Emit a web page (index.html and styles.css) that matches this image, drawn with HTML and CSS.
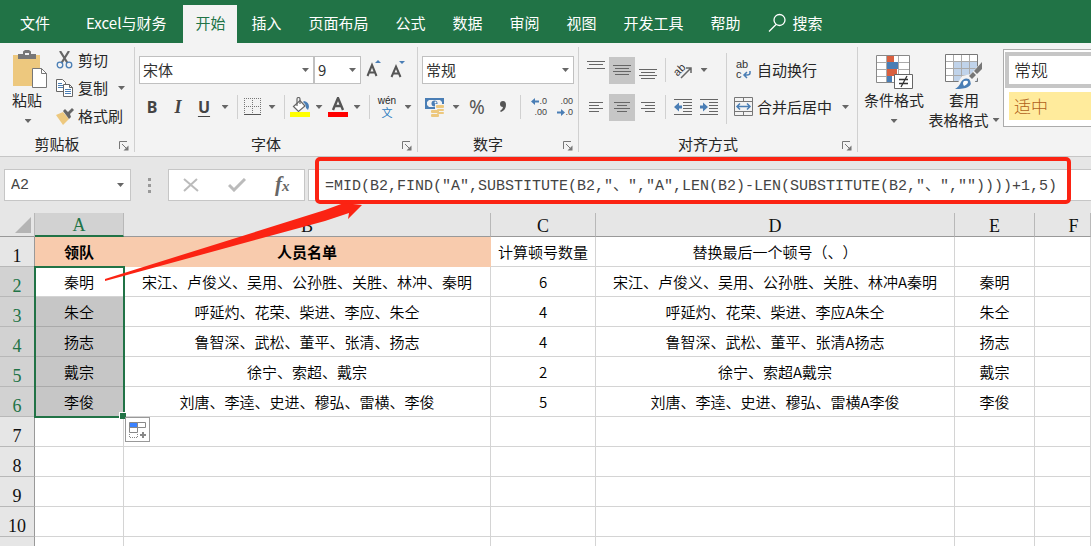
FILE: index.html
```html
<!DOCTYPE html>
<html lang="zh-CN">
<head>
<meta charset="utf-8">
<title>Excel</title>
<link rel="stylesheet" href="styles.css">
</head>
<body>
<svg class="defs" width="0" height="0"><symbol id="launch" viewBox="0 0 10 10"><path fill="none" stroke="#777" d="M.5 8V.500H8M3 3l4 4"/><path fill="#777" d="M9.500 4.500v5h-5z"/></symbol></svg>
<div class="app">
  <nav class="tabs" aria-label="功能区">
    <button class="tab tab-file">文件</button>
    <button class="tab tab-custom">Excel与财务</button>
    <button class="tab active">开始</button>
    <button class="tab">插入</button>
    <button class="tab">页面布局</button>
    <button class="tab">公式</button>
    <button class="tab">数据</button>
    <button class="tab">审阅</button>
    <button class="tab">视图</button>
    <button class="tab">开发工具</button>
    <button class="tab">帮助</button>
    <button class="tab search"><svg width="18" height="20" viewBox="0 0 18 20" fill="none" stroke="#fff" stroke-width="1.3"><circle cx="11.500" cy="7" r="5.500"/><path d="M8 11.500L1 18.500"/></svg>搜索</button>
  </nav>

  <div class="ribbon">
    <section class="group g-clip">
      <div class="group-body clip-body">
        <button class="big paste">
          <svg width="36" height="40" viewBox="0 0 36 40"><path fill="#edc87e" d="M1 5h27v31H1z"/><path fill="#777" d="M6 9V4h5V1.500L13 0h4l2 1.500V4h5v5z"/><path fill="#f3f3f3" d="M13 3h4v2h-4z"/><path fill="#fff" stroke="#777" d="M20.500 18.500h9l5 5v14h-14z"/><path fill="none" stroke="#777" d="M29.500 18.500v5h5"/></svg>
          <span>粘贴</span><i class="caret"></i>
        </button>
        <div class="clip-list">
          <button class="row-btn"><svg width="18" height="18" viewBox="0 0 18 18" fill="none"><path stroke="#666" stroke-width="2.200" d="M4 0l7.500 12M13 0L5.500 12"/><circle cx="4" cy="14" r="2.800" stroke="#4a7eb5" stroke-width="1.300"/><circle cx="13" cy="14" r="2.800" stroke="#4a7eb5" stroke-width="1.300"/></svg>剪切</button>
          <button class="row-btn"><svg width="18" height="18" viewBox="0 0 18 18" fill="#fff" stroke="#666"><path d="M.5.500h6l3 3v9h-9z"/><path stroke="#4a7eb5" d="M2 4.500h4M2 6.500h5M2 8.500h5"/><path d="M7.500 5.500h6l3 3v9h-9zM13.500 5.500v3h3"/><path stroke="#4a7eb5" d="M9 10.500h6M9 12.500h6M9 14.500h6"/></svg>复制<i class="caret push"></i></button>
          <button class="row-btn"><svg width="18" height="18" viewBox="0 0 18 18"><path fill="#edc87e" d="M0 8l7-3 6 7-6 6z"/><path fill="#666" d="M7 4l2-2 3 3 4-4 2 2-4 4 1 3-2 2z"/></svg>格式刷</button>
        </div>
      </div>
      <div class="group-foot"><span>剪贴板</span><button class="launch" aria-label="剪贴板设置"><svg width="10" height="10"><use href="#launch"/></svg></button></div>
    </section>

    <section class="group g-font">
      <div class="group-body rows">
        <div class="tool-row">
          <select class="combo font-name" aria-label="字体"><option>宋体</option></select><select class="combo font-size" aria-label="字号"><option>9</option></select>
          <button class="ic w26" aria-label="增大字号"><svg width="16" height="20" viewBox="0 0 16 20"><path fill="none" stroke="#555" stroke-width="2" d="M1.500 16L6 5l4.500 11M3 12.500h6"/><path fill="#4a7eb5" d="M9 3h6l-3-3z"/></svg></button>
          <button class="ic w22" aria-label="减小字号"><svg width="16" height="20" viewBox="0 0 16 20"><path fill="none" stroke="#555" stroke-width="2" d="M1.500 17L6 6.500 10.500 17M3 13.500h6"/><path fill="#4a7eb5" d="M9 1h6l-3 3z"/></svg></button>
        </div>
        <div class="tool-row">
          <button class="ic w26 fmt">B</button><button class="ic w26 fmt fi">I</button><button class="ic w26 fmt fu">U</button><button class="ic w16" aria-label="下划线选项"><i class="caret"></i></button>
          <i class="sep"></i>
          <button class="ic w22" aria-label="边框"><svg width="18" height="18" viewBox="0 0 18 18" stroke="#777" fill="none"><path stroke-dasharray="1 1" d="M0 .500h17M.5 0v17M16.500 0v17M8.500 0v17M0 8.500h17"/><path stroke="#555" d="M0 16.500h17"/></svg></button><button class="ic w16" aria-label="边框选项"><i class="caret"></i></button>
          <i class="sep"></i>
          <button class="ic w22" aria-label="填充颜色"><svg width="20" height="20" viewBox="0 0 20 20"><path fill="#fff" stroke="#666" stroke-width="1.200" d="M3.500 9.500L10 3.500l5 5.500-6.500 5.500z"/><path fill="none" stroke="#666" stroke-width="1.200" d="M7 9V2q0-1.500 1.500-1.500T10 2v5"/><path fill="#4a7eb5" d="M14 4q5 1 5 6l-1 3-2-2q0-4-3-6z"/><path fill="#ff0" d="M0 15h20v5H0z"/></svg></button><button class="ic w16" aria-label="填充颜色选项"><i class="caret"></i></button>
          <button class="ic w22" aria-label="字体颜色"><svg width="20" height="20" viewBox="0 0 20 20"><path fill="none" stroke="#555" stroke-width="2.400" d="M5 13L10 1l5 12M6.500 9h7"/><path fill="red" d="M0 15h20v5H0z"/></svg></button><button class="ic w16" aria-label="字体颜色选项"><i class="caret"></i></button>
          <i class="sep"></i>
          <button class="ic w26 wen"><small>wén</small><b>文</b></button><button class="ic w16" aria-label="拼音选项"><i class="caret"></i></button>
        </div>
      </div>
      <div class="group-foot"><span>字体</span><button class="launch" aria-label="字体设置"><svg width="10" height="10"><use href="#launch"/></svg></button></div>
    </section>

    <section class="group g-num">
      <div class="group-body rows">
        <div class="tool-row"><select class="combo num-format" aria-label="数字格式"><option>常规</option></select></div>
        <div class="tool-row">
          <button class="ic w26" aria-label="会计数字格式"><svg width="20" height="20" viewBox="0 0 20 20"><path fill="#4a7eb5" d="M0 1h19v11H0z"/><path fill="#f3f3f3" d="M2 5l2-2h11l2 2v3l-2 2H4L2 8z"/><circle cx="9.500" cy="6.500" r="3" fill="#4a7eb5"/><circle cx="10.500" cy="5.500" r="1" fill="#fff"/><path fill="#f3f3f3" d="M5 12h5V7h10v13H5z"/><g fill="#edc87e"><rect x="11" y="8" width="8" height="3" rx="1"/><rect x="12" y="12" width="7" height="2" rx="1"/><rect x="12" y="15" width="7" height="2" rx="1"/><rect x="6" y="13" width="8" height="3" rx="1"/><rect x="6" y="17" width="8" height="3" rx="1"/></g></svg></button><button class="ic w16" aria-label="货币选项"><i class="caret"></i></button>
          <button class="ic w26 pct">%</button><button class="ic w26" aria-label="千位分隔"><svg width="8" height="12" viewBox="0 0 8 12"><path fill="#555" d="M4 0q3 0 3 4 0 5-5 7l-1-1q3-2 3-4Q1 6 1 3q0-3 3-3z"/></svg></button>
          <i class="sep"></i>
          <button class="ic w26 dec"><span><svg width="8" height="7" viewBox="0 0 8 7"><path fill="#4a7eb5" d="M0 3.500L4 0v2.500h4v2H4V7z"/></svg>.0</span><span>.00</span></button><button class="ic w26 dec"><span>.00</span><span><svg width="8" height="7" viewBox="0 0 8 7"><path fill="#4a7eb5" d="M8 3.500L4 0v2.500H0v2h4V7z"/></svg>.0</span></button>
        </div>
      </div>
      <div class="group-foot"><span>数字</span><button class="launch" aria-label="数字设置"><svg width="10" height="10"><use href="#launch"/></svg></button></div>
    </section>

    <section class="group g-align">
      <div class="group-body align-body">
        <div class="rows">
          <div class="tool-row">
            <button class="ic w26" aria-label="顶端对齐"><svg width="18" height="28" stroke="#666"><path d="M0 5.500h18M2 8.500h14M0 12.500h18"/></svg></button><button class="ic w26 on" aria-label="垂直居中"><svg width="18" height="28" stroke="#666"><path d="M0 9.500h18M2 12.500h14M0 15.500h18M2 18.500h14"/></svg></button><button class="ic w26" aria-label="底端对齐"><svg width="18" height="28" stroke="#666"><path d="M0 13.500h18M2 16.500h14M0 19.500h18M2 22.500h14"/></svg></button>
            <i class="sep"></i>
            <button class="ic w26" aria-label="方向"><svg class="open" width="20" height="20" viewBox="0 0 20 20"><text class="ab" x="1" y="14" transform="rotate(-45 6 11)">ab</text><path fill="none" stroke="#666" stroke-width="1.500" d="M8 18L18 8M13 8h5v5"/></svg></button><button class="ic w16" aria-label="方向选项"><i class="caret"></i></button>
          </div>
          <div class="tool-row">
            <button class="ic w26" aria-label="左对齐"><svg width="14" height="28" stroke="#666"><path d="M0 9.500h14M0 12.500h10M0 15.500h14M0 18.500h10"/></svg></button><button class="ic w26 on" aria-label="居中"><svg width="18" height="28" stroke="#666"><path d="M1 9.500h16M4 12.500h10M1 15.500h16M4 18.500h10"/></svg></button><button class="ic w26" aria-label="右对齐"><svg width="14" height="28" stroke="#666"><path d="M0 9.500h14M4 12.500h10M0 15.500h14M4 18.500h10"/></svg></button>
            <i class="sep"></i>
            <button class="ic w26" aria-label="减少缩进"><svg width="18" height="18" stroke="#666"><path d="M0 1.500h18M9 4.500h9M9 7.500h9M9 10.500h9M9 13.500h9M0 16.500h18"/><path stroke="none" fill="#4a7eb5" d="M0 9l5-4.500v3h3v3H5v3z"/></svg></button><button class="ic w26" aria-label="增加缩进"><svg width="18" height="18" stroke="#666"><path d="M0 1.500h18M9 4.500h9M9 7.500h9M9 10.500h9M9 13.500h9M0 16.500h18"/><path stroke="none" fill="#4a7eb5" d="M8 9L3 4.500v3H0v3h3v3z"/></svg></button>
          </div>
        </div>
        <i class="sep tall"></i>
        <div class="rows wraps">
          <button class="row-btn"><svg class="open" width="19" height="20" viewBox="0 0 19 20"><text class="ab" x="2" y="8">ab</text><text class="ab" x="2" y="18">c</text><path fill="none" stroke="#4a7eb5" stroke-width="1.500" d="M16 11v2q0 2-3 2h-3M13 12l-3 3 3 3"/></svg>自动换行</button>
          <button class="row-btn"><svg width="19" height="20" viewBox="0 0 19 20" fill="none" stroke="#777"><path d="M.5.500h18v18H.5zM.5 4.500h18M.5 14.500h18M9.500 0v4M9.500 15v4"/><path stroke="#4a7eb5" stroke-width="1.500" d="M3 9.500h13M6 6.500l-3 3 3 3M13 6.500l3 3-3 3"/></svg>合并后居中<i class="caret push"></i></button>
        </div>
      </div>
      <div class="group-foot"><span>对齐方式</span><button class="launch" aria-label="对齐设置"><svg width="10" height="10"><use href="#launch"/></svg></button></div>
    </section>

    <section class="group g-style">
      <button class="big cond">
        <svg width="38" height="38" viewBox="0 0 38 38"><path fill="#fff" d="M1 3h33v27H1z"/><path fill="#d9603f" d="M12 3h7v7h-7zM12 17h10v7H12z"/><path fill="#4a7eb5" d="M12 10h11v7H12zM12 24h5v6h-5z"/><path fill="none" stroke="#888" d="M1.500 3.500h33v27h-33z"/><path fill="none" stroke="#aaa" d="M2 10.500h10M23 10.500h11M2 17.500h10M23 17.500h11M2 24.500h10M11.500 4v26M23.500 4v26"/><path fill="#fff" stroke="#666" d="M19.500 22.500h18v14h-18z"/><path stroke="#333" stroke-width="1.300" d="M24 27.500h9M24 31.500h9M32 24l-6 11"/></svg>
        <span>条件格式</span><i class="caret"></i>
      </button>
      <button class="big tblfmt">
        <svg width="38" height="38" viewBox="0 0 38 38"><path fill="#fff" d="M1 2h32v28H1z"/><path fill="#c0d3ea" d="M9 9h24v21H9z"/><path fill="none" stroke="#aaa" d="M0 9.500h32M0 16.500h32M0 23.500h32M8.500 2v28M16.500 2v28M24.500 2v28"/><path fill="none" stroke="#777" d="M.5 2.500h32v27H.5z"/><path fill="#f3f3f3" d="M9 37l8-13 9-2L38 8v10L25 37z"/><path fill="#777" d="M37 10v7l-5 5-3-3zM28 20l3 3-4 4-3-3z"/><path fill="#4a7eb5" d="M10 37q4-2 6-7 3-5 8-3 4 5-1 8-4 2-13 2z"/><path fill="#fff" d="M19 29q4-1 4 1t-4 4q-2-3 0-5z"/></svg>
        <span>套用</span><span class="with-caret">表格格式<i class="caret"></i></span>
      </button>
      <div class="gallery">
        <button class="style-cell normal">常规</button>
        <button class="style-cell neutral">适中</button>
      </div>
    </section>
  </div>

  <div class="formula-bar">
    <div class="name-box"><input aria-label="名称框" value="A2"><i class="caret"></i></div>
    <div class="grip"><i></i><i></i><i></i></div>
    <div class="fx-buttons">
      <button aria-label="取消"><svg width="16" height="14" viewBox="0 0 16 14" stroke="#bbb" stroke-width="2" fill="none"><path d="M1 1l14 12M14 1L1 13"/></svg></button>
      <button aria-label="输入"><svg width="18" height="14" viewBox="0 0 18 14" stroke="#bbb" stroke-width="3" fill="none"><path d="M1 7l5 5L17 1"/></svg></button>
      <button class="fx" aria-label="插入函数">f<small>x</small></button>
    </div>
    <div class="formula"><input aria-label="编辑栏" value="=MID(B2,FIND(&quot;A&quot;,SUBSTITUTE(B2,&quot;、&quot;,&quot;A&quot;,LEN(B2)-LEN(SUBSTITUTE(B2,&quot;、&quot;,&quot;&quot;))))+1,5)"></div>
    <div class="callout"></div>
    <svg class="arrow" width="260" height="80" viewBox="0 0 260 80"><path fill="#fb2313" d="M0 74L220 5l19-7 18 2-14 14 1-6-24 8L0 76z"/></svg>
  </div>

  <main class="sheet">
    <table>
      <colgroup><col class="c-head"><col class="c-a"><col class="c-b"><col class="c-c"><col class="c-d"><col class="c-e"><col></colgroup>
      <thead><tr><th class="corner"><svg width="16" height="16"><path fill="#b4b4b4" d="M16 0v16H0z"/></svg></th><th class="sel">A</th><th>B</th><th>C</th><th>D</th><th>E</th><th class="f">F</th></tr></thead>
      <tbody>
        <tr><th>1</th><td class="title">领队</td><td class="title">人员名单</td><td>计算顿号数量</td><td>替换最后一个顿号（、）</td><td></td><td></td></tr>
        <tr><th class="sel">2</th><td class="first">秦明<div class="selection"><i class="handle"></i><button class="smart" aria-label="自动填充选项"><svg width="19" height="18" viewBox="0 0 19 18" fill="none" stroke="#888"><path fill="#3b82ff" d="M1.500 1.500h8v5h-8z"/><path d="M9.500 1.500h8v5h-8zM1.500 6.500h8v5h-8z"/><path stroke-dasharray="1 1" d="M1.500 13v3.500h8V13"/><path stroke-width="2" d="M12 14h6M15 11v6"/></svg></button></div></td><td>宋江、卢俊义、吴用、公孙胜、关胜、林冲、秦明</td><td>6</td><td>宋江、卢俊义、吴用、公孙胜、关胜、林冲A秦明</td><td>秦明</td><td></td></tr>
        <tr><th class="sel">3</th><td class="picked">朱仝</td><td>呼延灼、花荣、柴进、李应、朱仝</td><td>4</td><td>呼延灼、花荣、柴进、李应A朱仝</td><td>朱仝</td><td></td></tr>
        <tr><th class="sel">4</th><td class="picked">扬志</td><td>鲁智深、武松、董平、张清、扬志</td><td>4</td><td>鲁智深、武松、董平、张清A扬志</td><td>扬志</td><td></td></tr>
        <tr><th class="sel">5</th><td class="picked">戴宗</td><td>徐宁、索超、戴宗</td><td>2</td><td>徐宁、索超A戴宗</td><td>戴宗</td><td></td></tr>
        <tr><th class="sel">6</th><td class="picked">李俊</td><td>刘唐、李逵、史进、穆弘、雷横、李俊</td><td>5</td><td>刘唐、李逵、史进、穆弘、雷横A李俊</td><td>李俊</td><td></td></tr>
        <tr><th>7</th><td></td><td></td><td></td><td></td><td></td><td></td></tr>
        <tr><th>8</th><td></td><td></td><td></td><td></td><td></td><td></td></tr>
        <tr><th>9</th><td></td><td></td><td></td><td></td><td></td><td></td></tr>
        <tr><th>10</th><td></td><td></td><td></td><td></td><td></td><td></td></tr>
        <tr><th></th><td></td><td></td><td></td><td></td><td></td><td></td></tr>
      </tbody>
    </table>
  </main>
</div>
</body>
</html>
```
FILE: styles.css
```css
* { box-sizing: border-box; }
body { margin: 0; font: 15px/20px "Noto Sans CJK SC", sans-serif; color: #262626; }
button, select, input { font: inherit; color: inherit; margin: 0; padding: 0; border: 0; background: none; border-radius: 0; outline: 0; }
svg { display: block; flex: none; }
.app { display: flex; flex-direction: column; height: 100vh; overflow: hidden; background: #e6e6e6; }

/* Tabs */
.tabs { display: flex; align-items: flex-end; height: 43px; flex: none; background: #217346; white-space: nowrap; }
.tab { height: 38px; padding: 0 13px 3px 14px; color: #fff; }
.tab-file { padding: 0 22px 3px 20px; }
.tab-custom { padding-right: 17px; }
.tab.active { padding: 0 12px 3px; background: #f3f3f3; color: #217346; }
.tab.search { display: flex; align-items: center; gap: 7px; }

/* Ribbon */
.ribbon { display: flex; flex: none; height: 114px; padding: 4px 0; background: #f3f3f3; border-bottom: 1px solid #c6c6c6; white-space: nowrap; overflow: hidden; }
.group { display: flex; flex-direction: column; flex: none; border-right: 1px solid #d0d0d0; }
.group-body { flex: 1; min-height: 0; }
.group-foot { display: flex; align-items: flex-end; height: 18px; }
.group-foot span { flex: 1; text-align: center; line-height: 16px; }
.launch { width: 20px; height: 12px; padding: 0 0 0 5px; }
.g-clip { width: 135px; }
.g-font { width: 283px; }
.g-num { width: 161px; }
.g-align { width: 279px; }
.g-style { flex: 1; flex-direction: row; border: 0; padding-left: 5px; }
.caret { display: block; flex: none; width: 7px; height: 4px; background: #666; clip-path: polygon(0 0, 100% 0, 50% 100%); }
.big { display: flex; flex-direction: column; align-items: center; }
.clip-body { display: flex; padding: 3px 0 0 12px; }
.paste { width: 36px; height: 76px; }
.paste span { margin-right: 6px; }
.big .caret { margin-top: 9px; }
.paste .caret { margin-right: 4px; }
.clip-list { display: flex; flex-direction: column; gap: 8px; width: 69px; margin-left: 8px; }
.row-btn { display: flex; align-items: center; gap: 4px; height: 20px; }
.caret.push { margin-left: 6px; }
.rows { display: flex; flex-direction: column; gap: 9px; padding: 9px 4px 0; }
.tool-row { display: flex; height: 28px; align-items: center; }
.combo { appearance: none; flex: none; height: 28px; padding: 0 3px; color: #333; border: 1px solid #c0c0c0; background: #fff url("data:image/svg+xml,%3Csvg xmlns='http://www.w3.org/2000/svg' width='7' height='4'%3E%3Cpath fill='%23666' d='M0 0h7L3.5 4z'/%3E%3C/svg%3E") no-repeat right 4px center; }
.font-name { width: 175px; }
.font-size { width: 47px; }
.num-format { width: 152px; }
.ic { display: flex; align-items: center; justify-content: center; flex: none; height: 27px; }
.w16 { width: 16px; }
.w22 { width: 22px; }
.w26 { width: 26px; }
.on { background: #c6c6c6; }
.open { overflow: visible; }
.sep { flex: none; width: 1px; height: 24px; margin: 0 4px; background: #d0d0d0; }
.fmt { font: bold 16px/20px "Noto Sans", sans-serif; color: #444; }
.fi { font-family: "Liberation Serif", serif; font-style: italic; font-size: 18px; }
.fu { text-decoration: underline; text-underline-offset: 3px; text-decoration-thickness: 1px; }
.wen { flex-direction: column; }
.wen small { font: 10px/10px "Liberation Sans", sans-serif; }
.wen b { font-size: 11px; line-height: 12px; font-weight: 400; color: #2b7cc0; }
.pct { font: 19px/20px "Noto Sans", sans-serif; color: #555; }
.dec { flex-direction: column; align-items: flex-end; padding-right: 4px; font: 9px/11px "Liberation Sans", sans-serif; color: #444; }
.dec span { display: flex; align-items: center; }
.align-body { display: flex; }
.ab { font: 11px "Liberation Sans", sans-serif; fill: #333; stroke: none; }
.sep.tall { height: 71px; margin: 6px 7px 0 0; }
.wraps { padding-left: 0; padding-right: 0; }
.wraps .row-btn { height: 28px; }
.align-body .rows { width: 147px; flex: none; }
.align-body .wraps { width: 114px; }
.cond { width: 62px; padding-top: 5px; height: 80px; }
.tblfmt { width: 78px; padding-top: 5px; height: 88px; }
.with-caret { display: flex; align-items: center; gap: 4px; }
.with-caret .caret { margin: 0; }
.gallery { flex: 1; height: 78px; margin-top: 2px; padding: 2px 0 0 1px; border: 1px solid #ababab; border-right: 0; background: #fff; }
.style-cell { display: block; width: 100%; height: 28px; padding-left: 5px; text-align: left; font-size: 17px; font-weight: 300; }
.style-cell.normal { height: 36px; border: 4px solid #c6c6c6; border-right: 0; color: #000; }
.style-cell.neutral { width: auto; min-width: calc(100% - 4px); margin: 4px 0 0 4px; background: #ffeb9c; color: #b0611a; }

/* Formula bar */
.formula-bar { position: relative; display: flex; flex: none; height: 56px; padding: 12px 0 12px 4px; }
.name-box { display: flex; align-items: center; width: 127px; padding: 0 6px; background: #fff; border: 1px solid #c6c6c6; }
.name-box input { flex: 1; min-width: 0; font: 15px "Liberation Mono", monospace; color: #444; }
.grip { display: flex; flex-direction: column; justify-content: center; align-items: center; gap: 3px; width: 37px; }
.grip i { width: 3px; height: 3px; background: #999; }
.fx-buttons { display: flex; align-items: center; justify-content: space-around; width: 137px; margin-right: 3px; background: #fff; border: 1px solid #c6c6c6; }
.fx { font: italic bold 21px/20px "Liberation Serif", serif; color: #666; }
.fx small { font-size: 15px; }
.formula { flex: 1; display: flex; background: #fff; border: 1px solid #c6c6c6; border-right: 0; }
.formula input { flex: 1; min-width: 0; padding: 0 0 2px 16px; font: 15px "Liberation Mono", "Noto Sans CJK SC", monospace; color: #444; }
.callout { position: absolute; left: 315px; top: 0; width: 756px; height: 47px; border: 4px solid #fb2313; border-radius: 5px; }
.arrow { position: absolute; left: 105px; top: 48px; overflow: visible; z-index: 2; }

/* Sheet */
.sheet { flex: 1; min-height: 0; overflow: hidden; background: #fff; }
table { width: 100%; table-layout: fixed; border-collapse: separate; border-spacing: 0; }
.c-head { width: 35px; }
.c-a { width: 89px; }
.c-b { width: 367px; }
.c-c { width: 105px; }
.c-d { width: 359px; }
.c-e { width: 80px; }
td { position: relative; height: 30px; padding: 0; border-right: 1px solid #d4d4d4; border-bottom: 1px solid #d4d4d4; text-align: center; font-weight: 350; text-spacing-trim: space-all; color: #000; white-space: nowrap; }
th { height: 30px; padding: 0; font: 18px/20px "Liberation Serif", serif; color: #111; background: #e6e6e6; vertical-align: bottom; border-right: 1px solid #999; border-bottom: 1px solid #b8b8b8; }
thead th { height: 24px; border-bottom-color: #999; border-right: 1px solid #b8b8b8; }
th.sel { background: #d2d2d2; color: #217346; }
thead th.sel { border-bottom: 2px solid #217346; }
.corner svg { margin: 0 0 3px 15px; }
.f { padding-left: 22px; }
td.title { background: #f8cbad; border-color: #f8cbad; font-weight: 700; }
td.picked { background: #c6c6c6; border-bottom-color: #aaa; }
.selection { position: absolute; left: -1px; top: -1px; width: 91px; height: 152px; border: 2px solid #217346; z-index: 1; }
.handle { position: absolute; right: -3px; bottom: -3px; width: 7px; height: 7px; background: #217346; border: 1px solid #fff; border-right: 0; border-bottom: 0; }
.smart { position: absolute; left: 89px; top: 149px; width: 25px; height: 25px; padding: 3px 2px; background: #fff; border: 1px solid #999; }
.defs { position: absolute; }
```
